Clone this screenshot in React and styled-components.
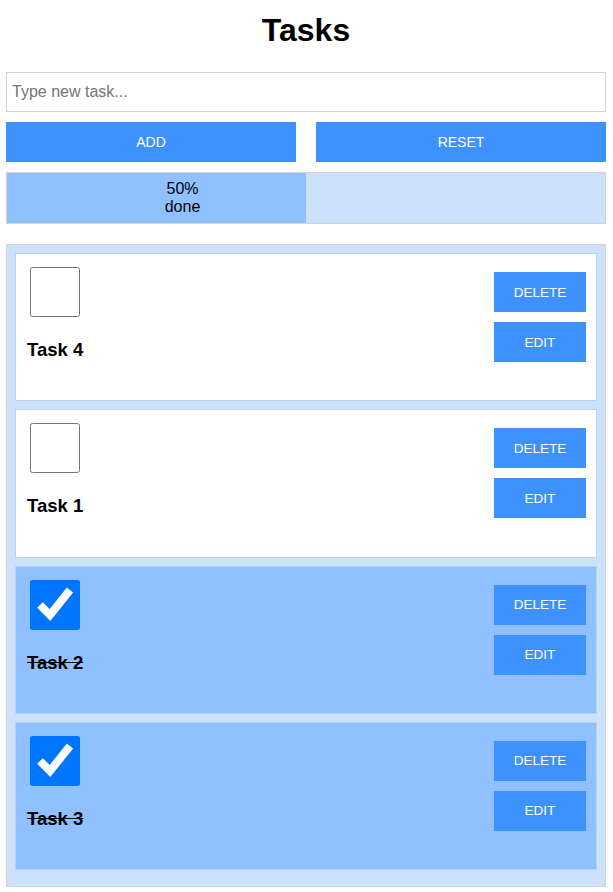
import { useState } from "react"
import styled, { createGlobalStyle } from "styled-components"

const GlobalStyle = createGlobalStyle`
  body {
    margin: 0;
    background: white;
    font-family: "Liberation Sans Narrow", "Arial Narrow", "Liberation Sans", Arial, sans-serif;
    color: black;
  }
  * {
    box-sizing: border-box;
  }
`

const narrow = `"Liberation Sans Narrow", "Arial Narrow", "Liberation Sans", Arial, sans-serif`

const Page = styled.div`
  padding: 0 7px 0 6px;
`

const Title = styled.h1`
  margin: 12px 0 23px;
  font-size: 32px;
  font-weight: bold;
  text-align: center;
  font-family: ${narrow};
`

const TaskInput = styled.input`
  display: block;
  width: 100%;
  height: 40px;
  padding: 0 5px;
  border: 1px solid #d3d3d3;
  font-size: 16px;
  font-family: ${narrow};
  outline: none;

  &::placeholder {
    color: #757575;
  }
`

const ButtonRow = styled.div`
  display: grid;
  grid-template-columns: 1fr 1fr;
  gap: 20px;
  margin-top: 10px;
`

const BlueButton = styled.button`
  height: 40px;
  border: none;
  background-color: #3d92ff;
  color: white;
  font-size: 14px;
  font-family: ${narrow};
  cursor: pointer;
`

const Progress = styled.div`
  margin-top: 10px;
  height: 52px;
  border: 1px solid #d3d3d3;
  background-color: #cce2fc;
  display: flex;
`

const ProgressFill = styled.div`
  background-color: #90c0ff;
  display: flex;
  align-items: center;
  justify-content: center;
  padding-left: 52px;
  text-align: center;
  font-size: 16px;
  line-height: 18px;
  font-family: ${narrow};
`

const List = styled.div`
  margin-top: 20px;
  border: 1px solid #d3d3d3;
  background-color: #cce2fc;
  padding: 8px;
`

const Card = styled.div`
  display: flex;
  justify-content: space-between;
  align-items: flex-start;
  height: 148.33px;
  margin-bottom: 8px;
  padding: 10px;
  border: 1px solid #b6d4fa;
  background-color: ${(p) => (p.$done ? "#90c0ff" : "white")};
`

const TaskMain = styled.div`
  display: flex;
  flex-direction: column;
  align-items: flex-start;
`

const Check = styled.input`
  width: 50px;
  height: 50px;
  margin: 3px 3px 3px 4px;
  cursor: pointer;
`

const TaskName = styled.h3`
  margin: 19px 0 0 1px;
  font-size: 18.5px;
  font-weight: bold;
  font-family: "Liberation Sans", Arial, sans-serif;
  text-decoration: ${(p) => (p.$done ? "line-through" : "none")};
`

const Actions = styled.div`
  display: flex;
  flex-direction: column;
  gap: 10px;
  padding-top: 8px;
`

const SmallButton = styled(BlueButton)`
  width: 92px;
  font-family: "Liberation Sans", Arial, sans-serif;
  font-size: 13.5px;
`

const initialTasks = [
  { id: 4, name: "Task 4", done: false },
  { id: 1, name: "Task 1", done: false },
  { id: 2, name: "Task 2", done: true },
  { id: 3, name: "Task 3", done: true },
]

const App = () => {
  const [tasks, setTasks] = useState(initialTasks)
  const [text, setText] = useState("")

  const doneCount = tasks.filter((t) => t.done).length
  const percent = tasks.length ? Math.round((doneCount / tasks.length) * 100) : 0

  const toggle = (id) => {
    setTasks(tasks.map((t) => (t.id === id ? { ...t, done: !t.done } : t)))
  }

  const addTask = () => {
    if (!text.trim()) return
    const id = Math.max(0, ...tasks.map((t) => t.id)) + 1
    setTasks([{ id, name: text, done: false }, ...tasks])
    setText("")
  }

  return (
    <Page>
      <GlobalStyle />
      <Title>Tasks</Title>
      <TaskInput placeholder="Type new task..." value={text} onChange={(e) => setText(e.target.value)} />
      <ButtonRow>
        <BlueButton onClick={addTask}>ADD</BlueButton>
        <BlueButton onClick={() => setTasks(initialTasks)}>RESET</BlueButton>
      </ButtonRow>
      <Progress>
        <ProgressFill style={{ width: `${percent}%` }}>
          {percent}%
          <br />
          done
        </ProgressFill>
      </Progress>
      <List>
        {tasks.map((task) => (
          <Card key={task.id} $done={task.done}>
            <TaskMain>
              <Check type="checkbox" checked={task.done} onChange={() => toggle(task.id)} />
              <TaskName $done={task.done}>{task.name}</TaskName>
            </TaskMain>
            <Actions>
              <SmallButton onClick={() => setTasks(tasks.filter((t) => t.id !== task.id))}>DELETE</SmallButton>
              <SmallButton>EDIT</SmallButton>
            </Actions>
          </Card>
        ))}
      </List>
    </Page>
  )
}

export default App
